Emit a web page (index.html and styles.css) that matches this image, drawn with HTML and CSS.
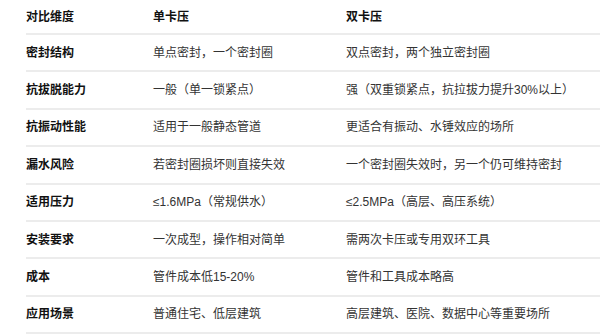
FILE: index.html
```html
<!DOCTYPE html>
<html lang="zh">
<head>
    <meta charset="UTF-8">
    <title>单卡压与双卡压对比</title>
    <link rel="stylesheet" href="styles.css">
</head>
<body>
    <table class="compare">
        <thead>
            <tr>
                <th>对比维度</th>
                <th>单卡压</th>
                <th>双卡压</th>
            </tr>
        </thead>
        <tbody>
            <tr>
                <td>密封结构</td>
                <td>单点密封，一个密封圈</td>
                <td>双点密封，两个独立密封圈</td>
            </tr>
            <tr>
                <td>抗拔脱能力</td>
                <td>一般（单一锁紧点）</td>
                <td>强（双重锁紧点，抗拉拔力提升30%以上）</td>
            </tr>
            <tr>
                <td>抗振动性能</td>
                <td>适用于一般静态管道</td>
                <td>更适合有振动、水锤效应的场所</td>
            </tr>
            <tr>
                <td>漏水风险</td>
                <td>若密封圈损坏则直接失效</td>
                <td>一个密封圈失效时，另一个仍可维持密封</td>
            </tr>
            <tr>
                <td>适用压力</td>
                <td>≤1.6MPa（常规供水）</td>
                <td>≤2.5MPa（高层、高压系统）</td>
            </tr>
            <tr>
                <td>安装要求</td>
                <td>一次成型，操作相对简单</td>
                <td>需两次卡压或专用双环工具</td>
            </tr>
            <tr>
                <td>成本</td>
                <td>管件成本低15-20%</td>
                <td>管件和工具成本略高</td>
            </tr>
            <tr>
                <td>应用场景</td>
                <td>普通住宅、低层建筑</td>
                <td>高层建筑、医院、数据中心等重要场所</td>
            </tr>
        </tbody>
    </table>
</body>
</html>
```

FILE: styles.css
```css
body {
    margin: 0;
    padding: 0 0 0 26px;
    background: #fff;
    font-family: "Liberation Sans", "Noto Sans CJK SC", sans-serif;
    font-size: 12px;
    color: #333;
    overflow: hidden;
}

.compare {
    width: 574px;
    border-collapse: collapse;
    table-layout: fixed;
}

.compare th,
.compare td {
    text-align: left;
    padding: 0;
    vertical-align: middle;
    line-height: 16px;
    border-bottom: 2px solid #ececec;
}

.compare th {
    height: 33px;
    font-weight: bold;
    color: #111;
}

.compare td {
    height: 35.4px;
}

.compare th:nth-child(1) { width: 127px; }
.compare th:nth-child(2) { width: 193px; }

.compare td:first-child {
    font-weight: bold;
    color: #111;
}
```
